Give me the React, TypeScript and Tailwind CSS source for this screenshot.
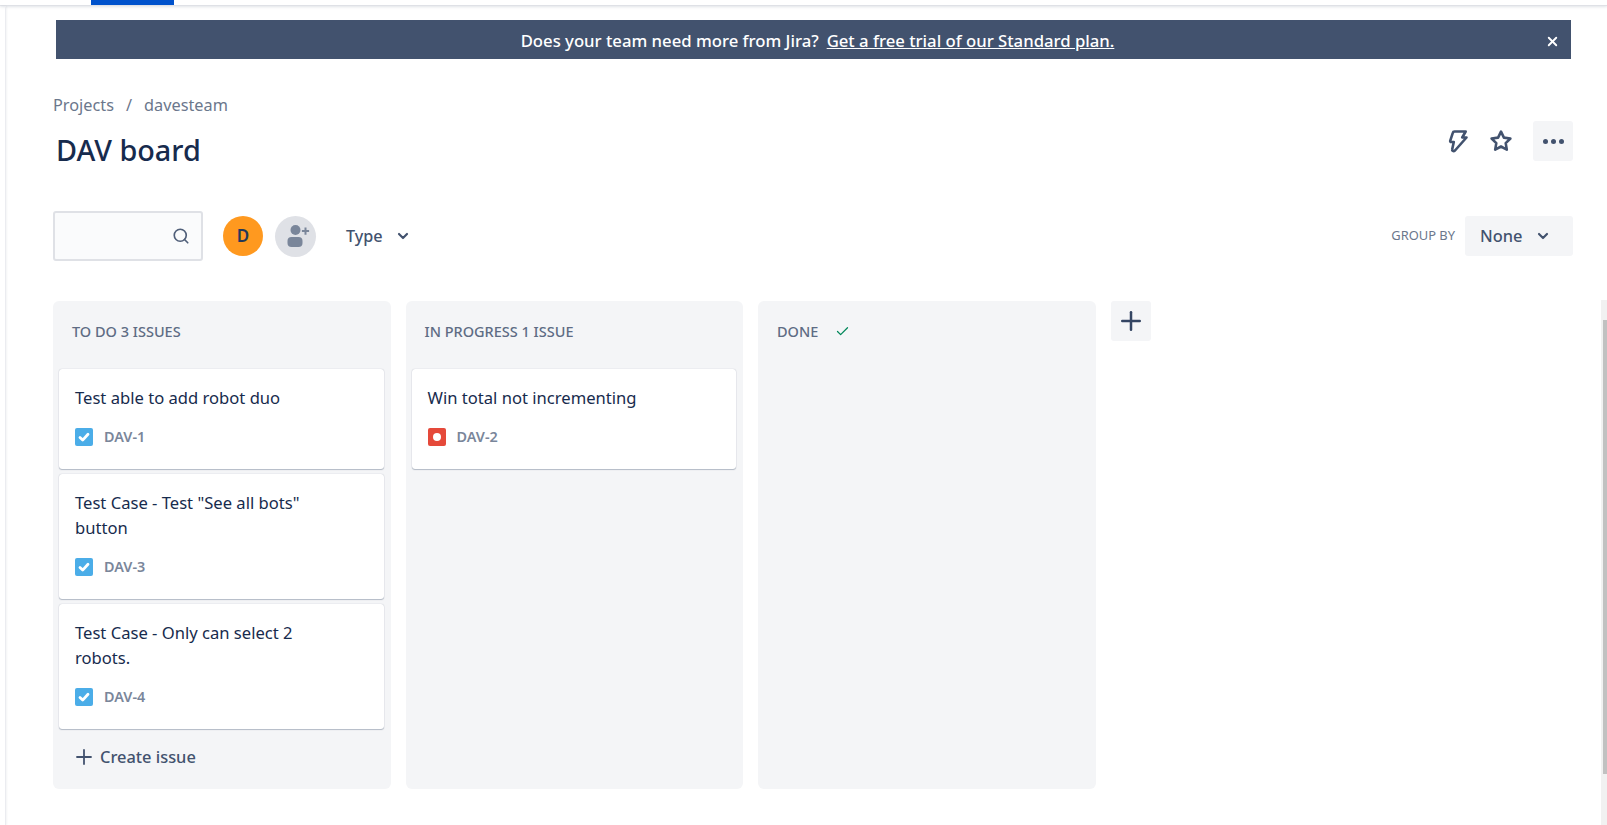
import { Check, ChevronDown, Plus, Search, X } from 'lucide-react';

const cards1 = [
  { title: 'Test able to add robot duo', id: 'DAV-1' },
  { title: 'Test Case - Test "See all bots" button', id: 'DAV-3' },
  { title: 'Test Case - Only can select 2 robots.', id: 'DAV-4' },
];

function StoryIcon() {
  return (
    <svg width="18" height="18" viewBox="0 0 18 18" className="shrink-0">
      <rect width="18" height="18" rx="2" fill="#4bade8" />
      <path d="M5 9.4l2.7 2.7L13 6.2" fill="none" stroke="#fff" strokeWidth="2.8" strokeLinecap="round" strokeLinejoin="round" />
    </svg>
  );
}

function BugIcon() {
  return (
    <svg width="18" height="18" viewBox="0 0 18 18" className="shrink-0">
      <rect width="18" height="18" rx="2" fill="#e5493a" />
      <circle cx="9" cy="9" r="4" fill="#fff" />
    </svg>
  );
}

function Card({ title, id, bug }: { title: string; id: string; bug?: boolean }) {
  return (
    <div className="bg-white rounded-[3px] shadow-[0_1px_1px_rgba(9,30,66,0.25),0_0_1px_rgba(9,30,66,0.31)] pt-[16px] pl-4 pr-[56px] pb-[21px]">
      <div className="text-[16.6px] leading-[25px] text-[#172b4d]">{title}</div>
      <div className="flex items-center mt-[16px] h-[22px]">
        {bug ? <BugIcon /> : <StoryIcon />}
        <span className="ml-[11px] text-[14.4px] font-semibold text-[#7a869a] -mt-[1px]">{id}</span>
      </div>
    </div>
  );
}

function ColumnHeader({ children }: { children: React.ReactNode }) {
  return (
    <div className="flex items-center h-[68px] px-[19px] pb-[7px] text-[14.5px] font-medium text-[#5e6c84]">{children}</div>
  );
}

export default function App() {
  return (
    <div className="relative h-[825px] w-[1607px] overflow-hidden bg-white font-['Noto_Sans',sans-serif]">
      {/* top strip */}
      <div className="h-[6px] border-b border-[#dfe1e6] shadow-[0_1px_3px_rgba(9,30,66,0.12)] pl-[91px]">
        <div className="w-[83px] h-[5px] bg-[#0052cc]" />
      </div>

      <div className="flex h-[819px]">
        <div className="w-[6px] shrink-0 border-r border-[#ebecf0] shadow-[1px_0_2px_rgba(9,30,66,0.05)]" />
        <div className="flex-1 min-w-0 pl-[47px] pr-[34px]">
          {/* banner */}
          <div className="relative mt-[14px] ml-[3px] mr-[2px] h-[39px] pt-[3px] pl-[8px] bg-[#42526e] flex items-center justify-center text-white text-[16.7px] font-medium">
            <span>Does your team need more from Jira?</span>
            <span className="ml-[8px] underline">Get a free trial of our Standard plan.</span>
            <X size={15} strokeWidth={3} className="absolute right-[11px] top-[14px]" />
          </div>

          {/* breadcrumb and title */}
          <div className="mt-[34px] flex items-center h-[24px] text-[16.3px] text-[#6b778c]">
            <span>Projects</span>
            <span className="mx-[12px]">/</span>
            <span>davesteam</span>
          </div>
          <div className="flex items-start justify-between">
            <h1 className="ml-[3px] mt-[14px] text-[28.8px] leading-[38px] font-medium text-[#172b4d]">DAV board</h1>
            <div className="flex items-center mt-[4px]">
              <svg width="22" height="24" viewBox="0 0 22 24" fill="none" className="mr-[19px]">
                <path d="M6.5 2.5h11.2l-3.5 6h4.3L7 21.5c-1.6 1.3-3.2.3-2.8-1.2l1.6-7.3H3.1c-.6 0-1-.6-.9-1.1l2.6-8c.2-.9.9-1.4 1.7-1.4z" stroke="#42526e" strokeWidth="2.6" strokeLinejoin="round" />
              </svg>
              <svg width="24" height="24" viewBox="0 0 24 24" fill="none" className="mr-[20px]">
                <path d="M12 2.6l2.9 6 6.5.9-4.7 4.6 1.1 6.5L12 17.5l-5.8 3.1 1.1-6.5-4.7-4.6 6.5-.9z" stroke="#42526e" strokeWidth="2.6" strokeLinejoin="round" />
              </svg>
              <div className="w-10 h-10 rounded-[3px] bg-[#f4f5f7] flex items-center justify-center gap-[3px]">
                <span className="w-[5px] h-[5px] rounded-full bg-[#42526e]" />
                <span className="w-[5px] h-[5px] rounded-full bg-[#42526e]" />
                <span className="w-[5px] h-[5px] rounded-full bg-[#42526e]" />
              </div>
            </div>
          </div>

          {/* filter row */}
          <div className="mt-[42px] flex items-center h-[50px]">
            <div className="w-[150px] h-[50px] rounded-[3px] border-2 border-[#dfe1e6] bg-[#fafbfc] flex items-center justify-end pr-[11px]">
              <Search size={18} strokeWidth={2.2} className="text-[#505f79]" />
            </div>
            <div className="ml-[20px] w-10 h-10 rounded-full bg-[#ff991f] flex items-center justify-center text-[17px] font-semibold text-[#253858]">D</div>
            <div className="ml-[12px] w-[41px] h-[41px] rounded-full bg-[#dfe1e6] flex items-center justify-center">
              <svg width="24" height="24" viewBox="0 0 24 24" fill="#7a869a" className="overflow-visible">
                <circle cx="11.5" cy="6" r="5" />
                <rect x="3.5" y="13" width="15" height="10" rx="4" />
                <path d="M20.5 3.5h2v2.6h2.6v2h-2.6v2.6h-2V8.100h-2.600v-2h2.600z" />
              </svg>
            </div>
            <span className="ml-[30px] text-[16.2px] font-medium text-[#42526e]">Type</span>
            <ChevronDown size={16} strokeWidth={3.2} className="ml-[12px] text-[#42526e]" />
            <div className="ml-auto flex items-center">
              <span className="text-[12.9px] text-[#6b778c]">GROUP BY</span>
              <div className="ml-[10px] w-[108px] h-10 rounded-[3px] bg-[#f4f5f7] flex items-center pl-[15px] text-[16.4px] font-medium text-[#42526e]">
                None
                <ChevronDown size={16} strokeWidth={3.2} className="ml-[13px]" />
              </div>
            </div>
          </div>

          {/* board */}
          <div className="mt-[40px] flex items-start gap-[15px]">
            <div className="w-[337.5px] h-[488px] rounded-[6px] bg-[#f4f5f7] flex flex-col">
              <ColumnHeader>TO DO 3 ISSUES</ColumnHeader>
              <div className="pl-[6px] pr-[7px] flex flex-col gap-[5px]">
                {cards1.map(c => <Card key={c.id} title={c.title} id={c.id} />)}
              </div>
              <div className="mt-[15px] ml-[19px] flex items-center h-[26px] text-[16.4px] font-medium text-[#42526e]">
                <Plus size={24} strokeWidth={1.8} />
                <span className="ml-[4px]">Create issue</span>
              </div>
            </div>
            <div className="w-[337.5px] h-[488px] rounded-[6px] bg-[#f4f5f7]">
              <ColumnHeader>IN PROGRESS 1 ISSUE</ColumnHeader>
              <div className="pl-[6px] pr-[7px]">
                <Card title="Win total not incrementing" id="DAV-2" bug />
              </div>
            </div>
            <div className="w-[337.5px] h-[488px] rounded-[6px] bg-[#f4f5f7]">
              <ColumnHeader>
                DONE
                <Check size={15} strokeWidth={2} className="ml-[17px] text-[#00875a]" />
              </ColumnHeader>
            </div>
            <div className="w-10 h-10 rounded-[3px] bg-[#f4f5f7] flex items-center justify-center">
              <Plus size={30} strokeWidth={2} className="text-[#344563]" />
            </div>
          </div>
        </div>
      </div>

      {/* page scrollbar */}
      <div className="absolute right-0 top-[300px] bottom-0 w-[6px] bg-[#f1f1f1]">
        <div className="mt-[20px] h-[454px] ml-[2px] bg-[#c1c1c1]" />
      </div>
    </div>
  );
}
